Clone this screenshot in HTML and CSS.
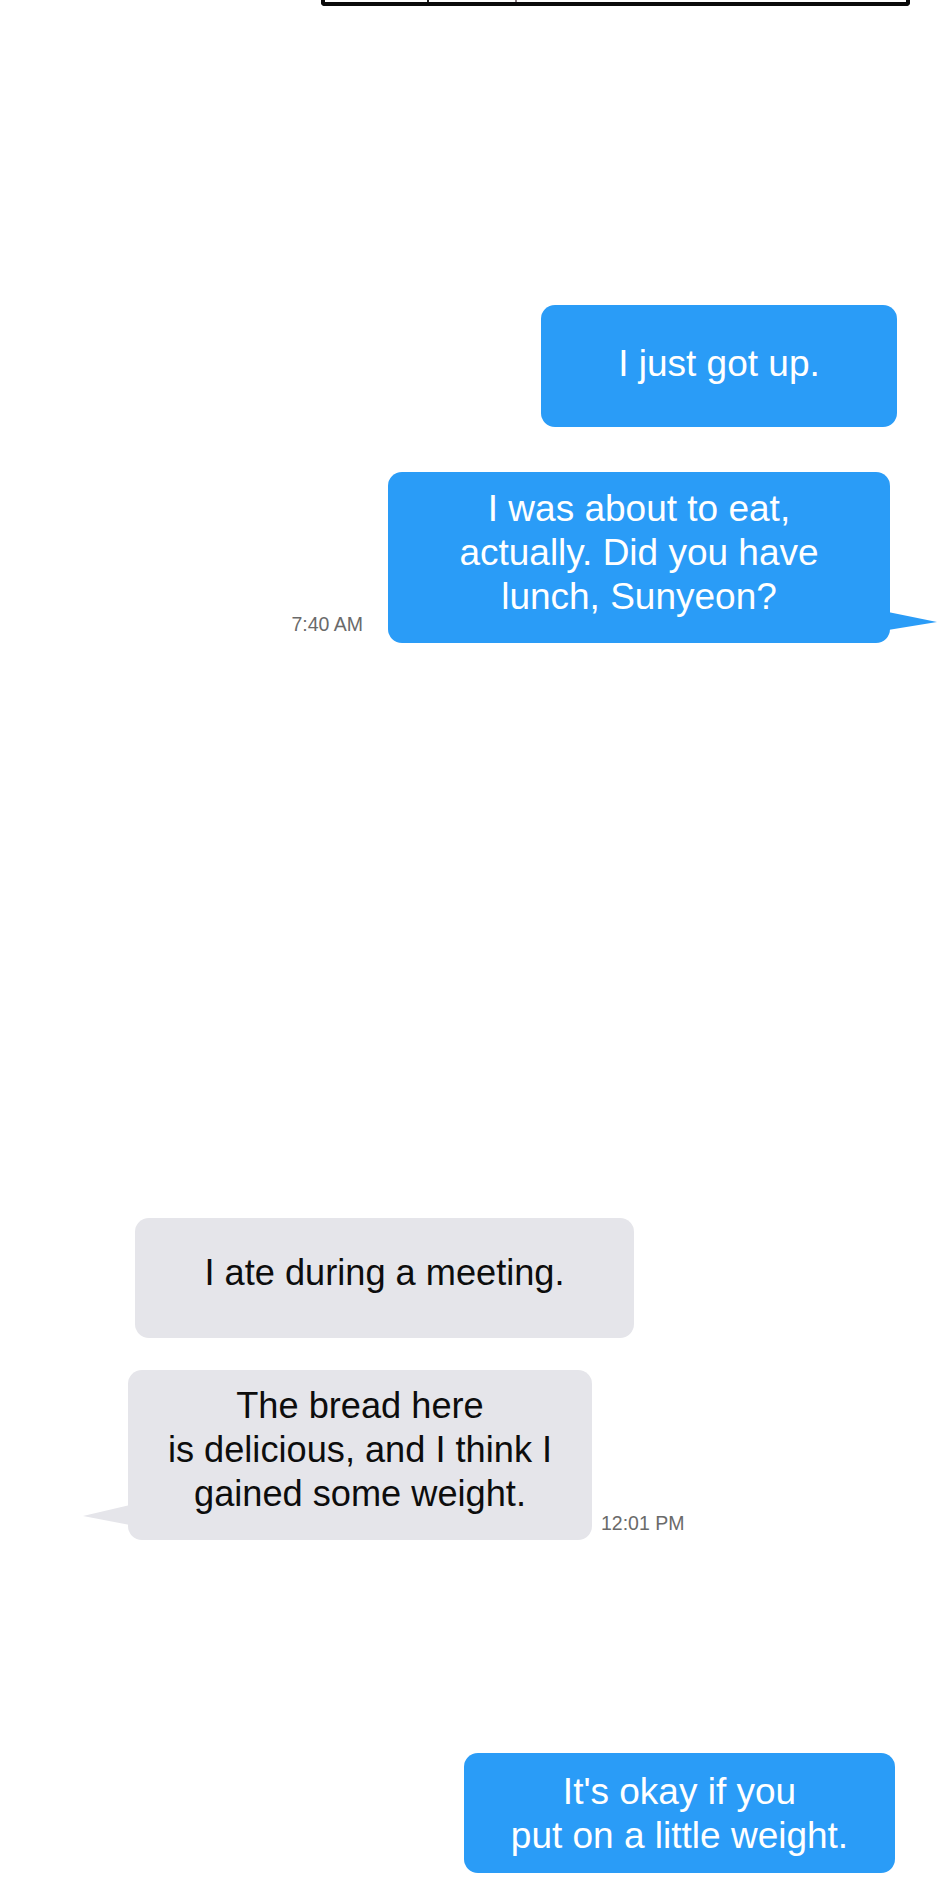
FILE: index.html
```html
<!DOCTYPE html>
<html lang="en">
<head>
<meta charset="utf-8">
<title>Messages</title>
<link rel="stylesheet" href="styles.css">
</head>
<body>
<div class="page">
  <div class="panel-edge"><span class="tick tick-a"></span><span class="tick tick-b"></span></div>

  <div class="row row-right row-1">
    <div class="bubble sent b1">I just got up.</div>
  </div>

  <div class="row row-right row-2">
    <span class="time time-left">7:40 AM</span>
    <div class="bubble sent b2 tail-right">I was about to eat,<br>actually. Did you have<br>lunch, Sunyeon?</div>
  </div>

  <div class="row row-left row-3">
    <div class="bubble recv b3">I ate during a meeting.</div>
  </div>

  <div class="row row-left row-4">
    <div class="bubble recv b4 tail-left">The bread here<br>is delicious, and I think I<br>gained some weight.</div>
    <span class="time time-right">12:01 PM</span>
  </div>

  <div class="row row-right row-5">
    <div class="bubble sent b5">It's okay if you<br>put on a little weight.</div>
  </div>
</div>
</body>
</html>
```

FILE: styles.css
```css
html, body {
  margin: 0;
  padding: 0;
  background: #ffffff;
}

.page {
  width: 940px;
  height: 1880px;
  overflow: hidden;
  font-family: "Liberation Sans", Arial, sans-serif;
}

.panel-edge {
  position: relative;
  margin-left: 321px;
  width: 581px;
  height: 2px;
  border: 4px solid #0a0a0a;
  border-top: none;
  border-radius: 0 0 4px 4px;
}

.tick {
  position: absolute;
  bottom: 0;
  width: 2px;
  height: 6px;
  background: #1a1a1a;
}
.tick-a { left: 102px; }
.tick-b { left: 190px; background: #8a7a80; }

.row {
  display: flex;
  align-items: flex-end;
}
.row-right {
  justify-content: flex-end;
}
.row-left {
  justify-content: flex-start;
}

.row-1 { margin-top: 299px; padding-right: 43px; }
.row-2 { margin-top: 45px; padding-right: 50px; }
.row-3 { margin-top: 575px; padding-left: 135px; }
.row-4 { margin-top: 32px; padding-left: 128px; }
.row-5 { margin-top: 213px; padding-right: 45px; }

.bubble {
  position: relative;
  box-sizing: border-box;
  line-height: 44px;
  text-align: center;
  border-radius: 14px;
}

.sent {
  background: #2a9cf7;
  color: #ffffff;
  font-size: 37px;
}

.recv {
  background: #e5e5ea;
  color: #0d0d0d;
  font-size: 36.2px;
}

.b1 { width: 356px; height: 122px; padding-top: 37px; }
.b2 { width: 502px; height: 171px; padding-top: 15px; }
.b3 { width: 499px; height: 120px; padding-top: 33px; }
.b4 { width: 464px; height: 170px; padding-top: 14px; }
.b5 { width: 431px; height: 120px; padding-top: 17px; }

.tail-right::after {
  content: "";
  position: absolute;
  left: calc(100% - 2px);
  top: 140px;
  width: 49px;
  height: 18px;
  background: #2a9cf7;
  clip-path: polygon(0 0, 100% 56%, 0 100%);
}

.tail-left::before {
  content: "";
  position: absolute;
  right: calc(100% - 2px);
  top: 135px;
  width: 47px;
  height: 20px;
  background: #e5e5ea;
  clip-path: polygon(100% 0, 0 55%, 100% 100%);
}

.time {
  font-size: 19.5px;
  line-height: 22px;
  color: #6a6a6a;
  white-space: nowrap;
}
.time-left {
  margin-right: 25px;
  margin-bottom: 8px;
}
.time-right {
  margin-left: 9px;
  margin-bottom: 6px;
}
```
